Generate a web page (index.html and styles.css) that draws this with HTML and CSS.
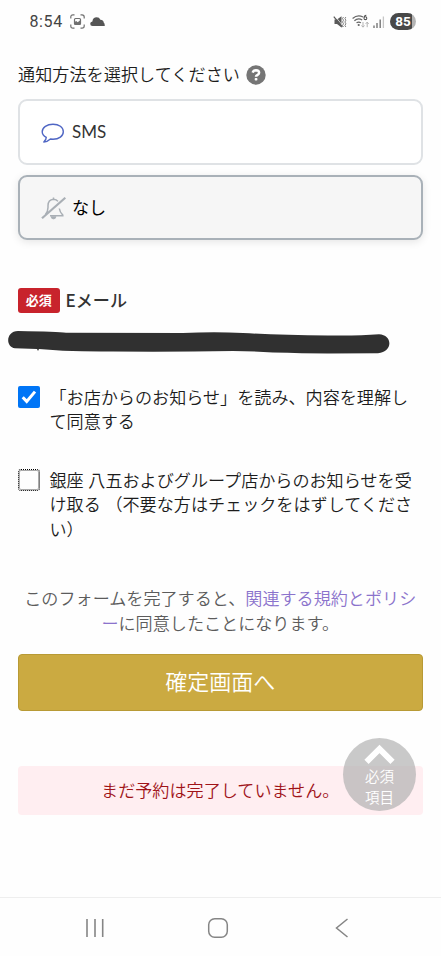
FILE: index.html
```html
<!DOCTYPE html>
<html lang="ja">
<head>
<meta charset="utf-8">
<meta name="viewport" content="width=device-width, initial-scale=1">
<title>予約フォーム</title>
<link rel="stylesheet" href="styles.css">
</head>
<body>
<header class="status">
  <span class="clock">8:54</span>
  <svg class="capture" width="15" height="15" viewBox="0 0 15 15" fill="none" stroke="#707070" stroke-width="1.200"><path d="M.8 4.500V3Q.8.8 3 .8h1.500M10.500.8H12q2.200 0 2.200 2.200v1.500M14.200 10.500V12q0 2.200-2.200 2.200h-1.500M4.500 14.200H3Q.8 14.200.8 12v-1.500"/><rect x="4.500" y="4.500" width="6" height="6" rx="1"/><path d="M4.500 10.500V8l1.700-1 1.500 1.200L10.500 6v4.500z" fill="#707070" stroke="none"/></svg>
  <svg class="cloud" width="15" height="9" viewBox="0 0 15 9"><path d="M2.500 9Q.2 9 .2 6.800.2 4.700 2.400 4.500 2.900.3 6.700.3q2.600 0 3.700 2.400 3 .1 3.300 2.700 1.200.8 1.100 3.600z" fill="#555"/></svg>
  <span class="grow"></span>
  <svg class="mute" width="14" height="14" viewBox="0 0 14 14"><path d="M1.500 4.500h2.500L8.500 1.200v11.300L4 9H1.500z" fill="#5a5a5a"/><path d="M1.700.8l8 9.800" stroke="#fefefe" stroke-width=".7"/><path d="M.8 1.600l8.500 10.400" stroke="#5a5a5a" stroke-width="1.200"/><path d="M10.500 2l-1 1.500 1 1.700-1 1.800 1 1.800-1 1.700 1 1.500M12.900 2l-1 1.500 1 1.700-1 1.800 1 1.800-1 1.700 1 1.500" fill="none" stroke="#666" stroke-width=".8"/></svg>
  <svg class="wifi" width="18" height="15" viewBox="0 0 18 15"><g fill="none" stroke="#666" stroke-width="1.200"><path d="M.6 4.500Q5.500.2 11 3M2.400 6.700Q6 3.600 10.200 6M4.500 8.900q2.200-1.700 4.400 0"/></g><circle cx="6.700" cy="11" r="1.100" fill="#666"/><path d="M14.300 1.200Q12 1.400 12 4M12 4.200a1.400 1.400 0 1 0 2.800 0 1.400 1.400 0 0 0-2.800 0" fill="none" stroke="#555" stroke-width="1.100"/><path d="M11 8v5M9.500 11.500l1.500 1.700 1.500-1.700M15.200 13.200V8.300M13.700 9.800l1.500-1.700 1.500 1.700" fill="none" stroke="#b2b2b2"/></svg>
  <svg class="signal" width="12" height="12" viewBox="0 0 12 12"><path d="M1 12V9.500M4 12V7" stroke="#777" stroke-width="1.400"/><path d="M7.200 12V3.500" stroke="#777" stroke-width="1.400"/><path d="M10.400 12V.5" stroke="#c6c6c6" stroke-width="1.300"/></svg>
  <span class="battery">85</span>
</header>

<main class="form">
  <div class="question"><span>通知方法を選択してください</span>
    <svg width="20" height="20" viewBox="0 0 20 20"><circle cx="10" cy="10" r="9.700" fill="#757575"/><path d="M6.700 7.600Q7.300 5.200 10 5.200q3.100.1 3.100 2.500 0 1.300-1.500 2.100-1.600.8-1.600 2" fill="none" stroke="#fff" stroke-width="2.500"/><rect x="8.700" y="13" width="2.700" height="2.500" rx=".8" fill="#fff"/></svg>
  </div>

  <div class="option sms">
    <svg width="24" height="22" viewBox="0 0 24 22" fill="none" stroke="#4f66c4" stroke-width="1.400" stroke-linejoin="round"><path d="M5.300 15.300C2.900 14 1.200 12 1.200 9.700 1.200 5.300 6 2.200 12 2.200S22.300 5.300 22.300 9.700 18 17.200 12 17.200l-2.600-.2Q6.500 19.800 2.800 20 5.300 17.800 5.300 15.300z"/></svg>
    <span>SMS</span>
  </div>
  <div class="option selected">
    <svg width="26" height="24" viewBox="0 0 26 24" fill="none" stroke="#a9afb5" stroke-width="1.500"><path d="M4.500 18.500Q7 15.500 7 11.500V9.500Q7.100 3.700 12.500 3.200q3 .1 4.500 2.200M12.500 3.200V1.500M18.300 12.500q.6 3.700 3.500 6.600v.6H9"/><path d="M10 20.700q.4 2.200 2.500 2.200t2.500-2.200z" fill="#a9afb5" stroke-width=".8"/><path d="M1 22.300L24.300 1.700" stroke-width="2.200"/></svg>
    <span>なし</span>
  </div>

  <div class="email"><span class="required">必須</span><span class="label">Eメール</span></div>
  <svg class="stroke" width="382" height="25" viewBox="0 0 382 25"><path d="M10 1C-2 1-3 17 7 18.300L29 19l1 2 1-2 24 1.800q25 1 50 .7 60 .5 120-.5 20 .2 40 1.500 30 .8 55 1l50-.2C385 22 385 5 371 4.300Q350 6 320 5.500 270 5 235 3q-30-1.500-60 .1L58 2.700Q50 1.500 10 1z" fill="#303030"/></svg>

  <label class="check"><span class="box checked"><svg width="22" height="22" viewBox="0 0 22 22"><path d="M4.700 11.200l4 4.200 8.300-9.800" fill="none" stroke="#fff" stroke-width="3"/></svg></span><span>「お店からのお知らせ」を読み、内容を理解し<br>て同意する</span></label>
  <label class="check second"><span class="box"></span><span>銀座 八五およびグループ店からのお知らせを受<br>け取る （不要な方はチェックをはずしてくださ<br>い）</span></label>

  <p class="terms">このフォームを完了すると、<a>関連する規約とポリシ<br>ー</a>に同意したことになります。</p>
  <div class="submit">確定画面へ</div>
  <div class="notice">まだ予約は完了していません。</div>
</main>

<div class="totop">
  <svg width="31" height="21" viewBox="0 0 31 21"><path d="M2.500 17.800L15.500 4.900l13 12.900" fill="none" stroke="#fff" stroke-width="6"/></svg>
  <span>必須</span><span>項目</span>
</div>

<nav class="nav">
  <svg width="20" height="20" viewBox="0 0 20 20" stroke="#858585" stroke-width="1.600"><path d="M2 1v18M10 1v18M17.700 1v18"/></svg>
  <svg width="22" height="22" viewBox="0 0 22 22" fill="none" stroke="#858585" stroke-width="1.500"><rect x="1.700" y="1.700" width="18.600" height="18.600" rx="6"/></svg>
  <svg width="14" height="20" viewBox="0 0 14 20" fill="none" stroke="#858585" stroke-width="1.500"><path d="M12.500 1L1.500 10l11 9"/></svg>
</nav>
</body>
</html>
```
FILE: styles.css
```css
* { box-sizing: border-box; }
body {
  margin: 0;
  width: 441px;
  height: 956px;
  position: relative;
  display: flex;
  flex-direction: column;
  overflow: hidden;
  background: #fefefe;
  color: #1c1c1c;
  font: 350 17.1px/24.5px Lato, "Noto Sans CJK JP", sans-serif;
  white-space: nowrap;
}
svg { display: block; flex: none; }
p { margin: 0; }

.status {
  display: flex;
  align-items: center;
  height: 43px;
  padding: 0 25px 0 29.5px;
}
.clock { width: 34px; margin-right: 6px; font: 400 16px/20px Roboto, sans-serif; color: #444; letter-spacing: .6px; }
.cloud { margin-left: 5px; }
.grow { flex: 1; }
.wifi { margin-left: 5px; }
.signal { margin-left: 3px; }
.battery {
  width: 26px;
  height: 17px;
  margin-left: 5px;
  border-radius: 9px;
  background: linear-gradient(90deg, #484848 85%, #b5b5b5 85%);
  color: #fff;
  font: 700 13.5px/17px Roboto, sans-serif;
  text-align: center;
}

.form { padding: 0 18.5px 0 18px; }
.question { display: flex; align-items: center; gap: 6px; height: 24px; margin: 20px 0 12px; }
.question span { letter-spacing: .06px; }
.option {
  display: flex;
  align-items: center;
  gap: 7px;
  height: 65.5px;
  padding-left: 21px;
  border: 2px solid #dfe2e5;
  border-radius: 9px;
  background: #fff;
}
.option.sms { color: #333; font-size: 17px; font-weight: 400; }
.option.sms svg { margin-top: 2px; }
.option.selected {
  gap: 5px;
  margin-top: 10px;
  padding-top: 1px;
  border-color: #a9b1b8;
  background: #f6f6f6;
  box-shadow: 0 2px 8px rgba(0, 0, 0, .1);
  color: #000;
  font-weight: 400;
}
.email { display: flex; align-items: center; gap: 6px; height: 25px; margin-top: 47.5px; }
.required {
  width: 41.5px;
  height: 25px;
  border-radius: 3px;
  background: #c8232c;
  color: #fff;
  font-size: 13px;
  font-weight: 700;
  line-height: 24px;
  text-align: center;
}
.label { font-weight: 500; color: #333; font-family: "Noto Sans CJK JP", sans-serif; }
.stroke { margin: 17px 0 0 -10px; }

.check { display: flex; gap: 9.5px; margin-top: 31.4px; }
.check.second { margin-top: 33.8px; }
.box { flex: none; width: 22px; height: 22px; border: 1px dotted #000; outline: 1px solid #aaa; outline-offset: -2px; border-radius: 3px; }
.box.checked { border: 0; outline: 0; border-radius: 2px; background: #0075f6; }

.terms { margin-top: 45px; text-align: center; color: #5c5c5c; }
.terms a { color: #8b73cc; }
.submit {
  height: 57px;
  margin-top: 17.5px;
  border: 1px solid #b89a35;
  border-radius: 4px;
  background: #cbaa41;
  color: #fff;
  font-size: 22px;
  line-height: 54px;
  text-align: center;
}
.notice {
  height: 49px;
  margin-top: 55px;
  border-radius: 4px;
  background: #ffeef1;
  color: #a01318;
  line-height: 49px;
  text-align: center;
}
.totop {
  position: absolute;
  left: 343px;
  top: 738px;
  width: 73px;
  height: 73px;
  padding-top: 6px;
  display: flex;
  flex-direction: column;
  align-items: center;
  border-radius: 50%;
  background: rgba(175, 175, 175, .68);
  color: #fff;
  font-size: 14.5px;
  line-height: 20.5px;
}
.totop svg { margin-bottom: 2px; }
.nav {
  display: flex;
  align-items: center;
  justify-content: space-between;
  height: 59px;
  margin-top: auto;
  padding: 2px 92px 0 85px;
  border-top: 1px solid #eee;
}
.nav svg:nth-child(2) { margin-right: 4px; }
```
